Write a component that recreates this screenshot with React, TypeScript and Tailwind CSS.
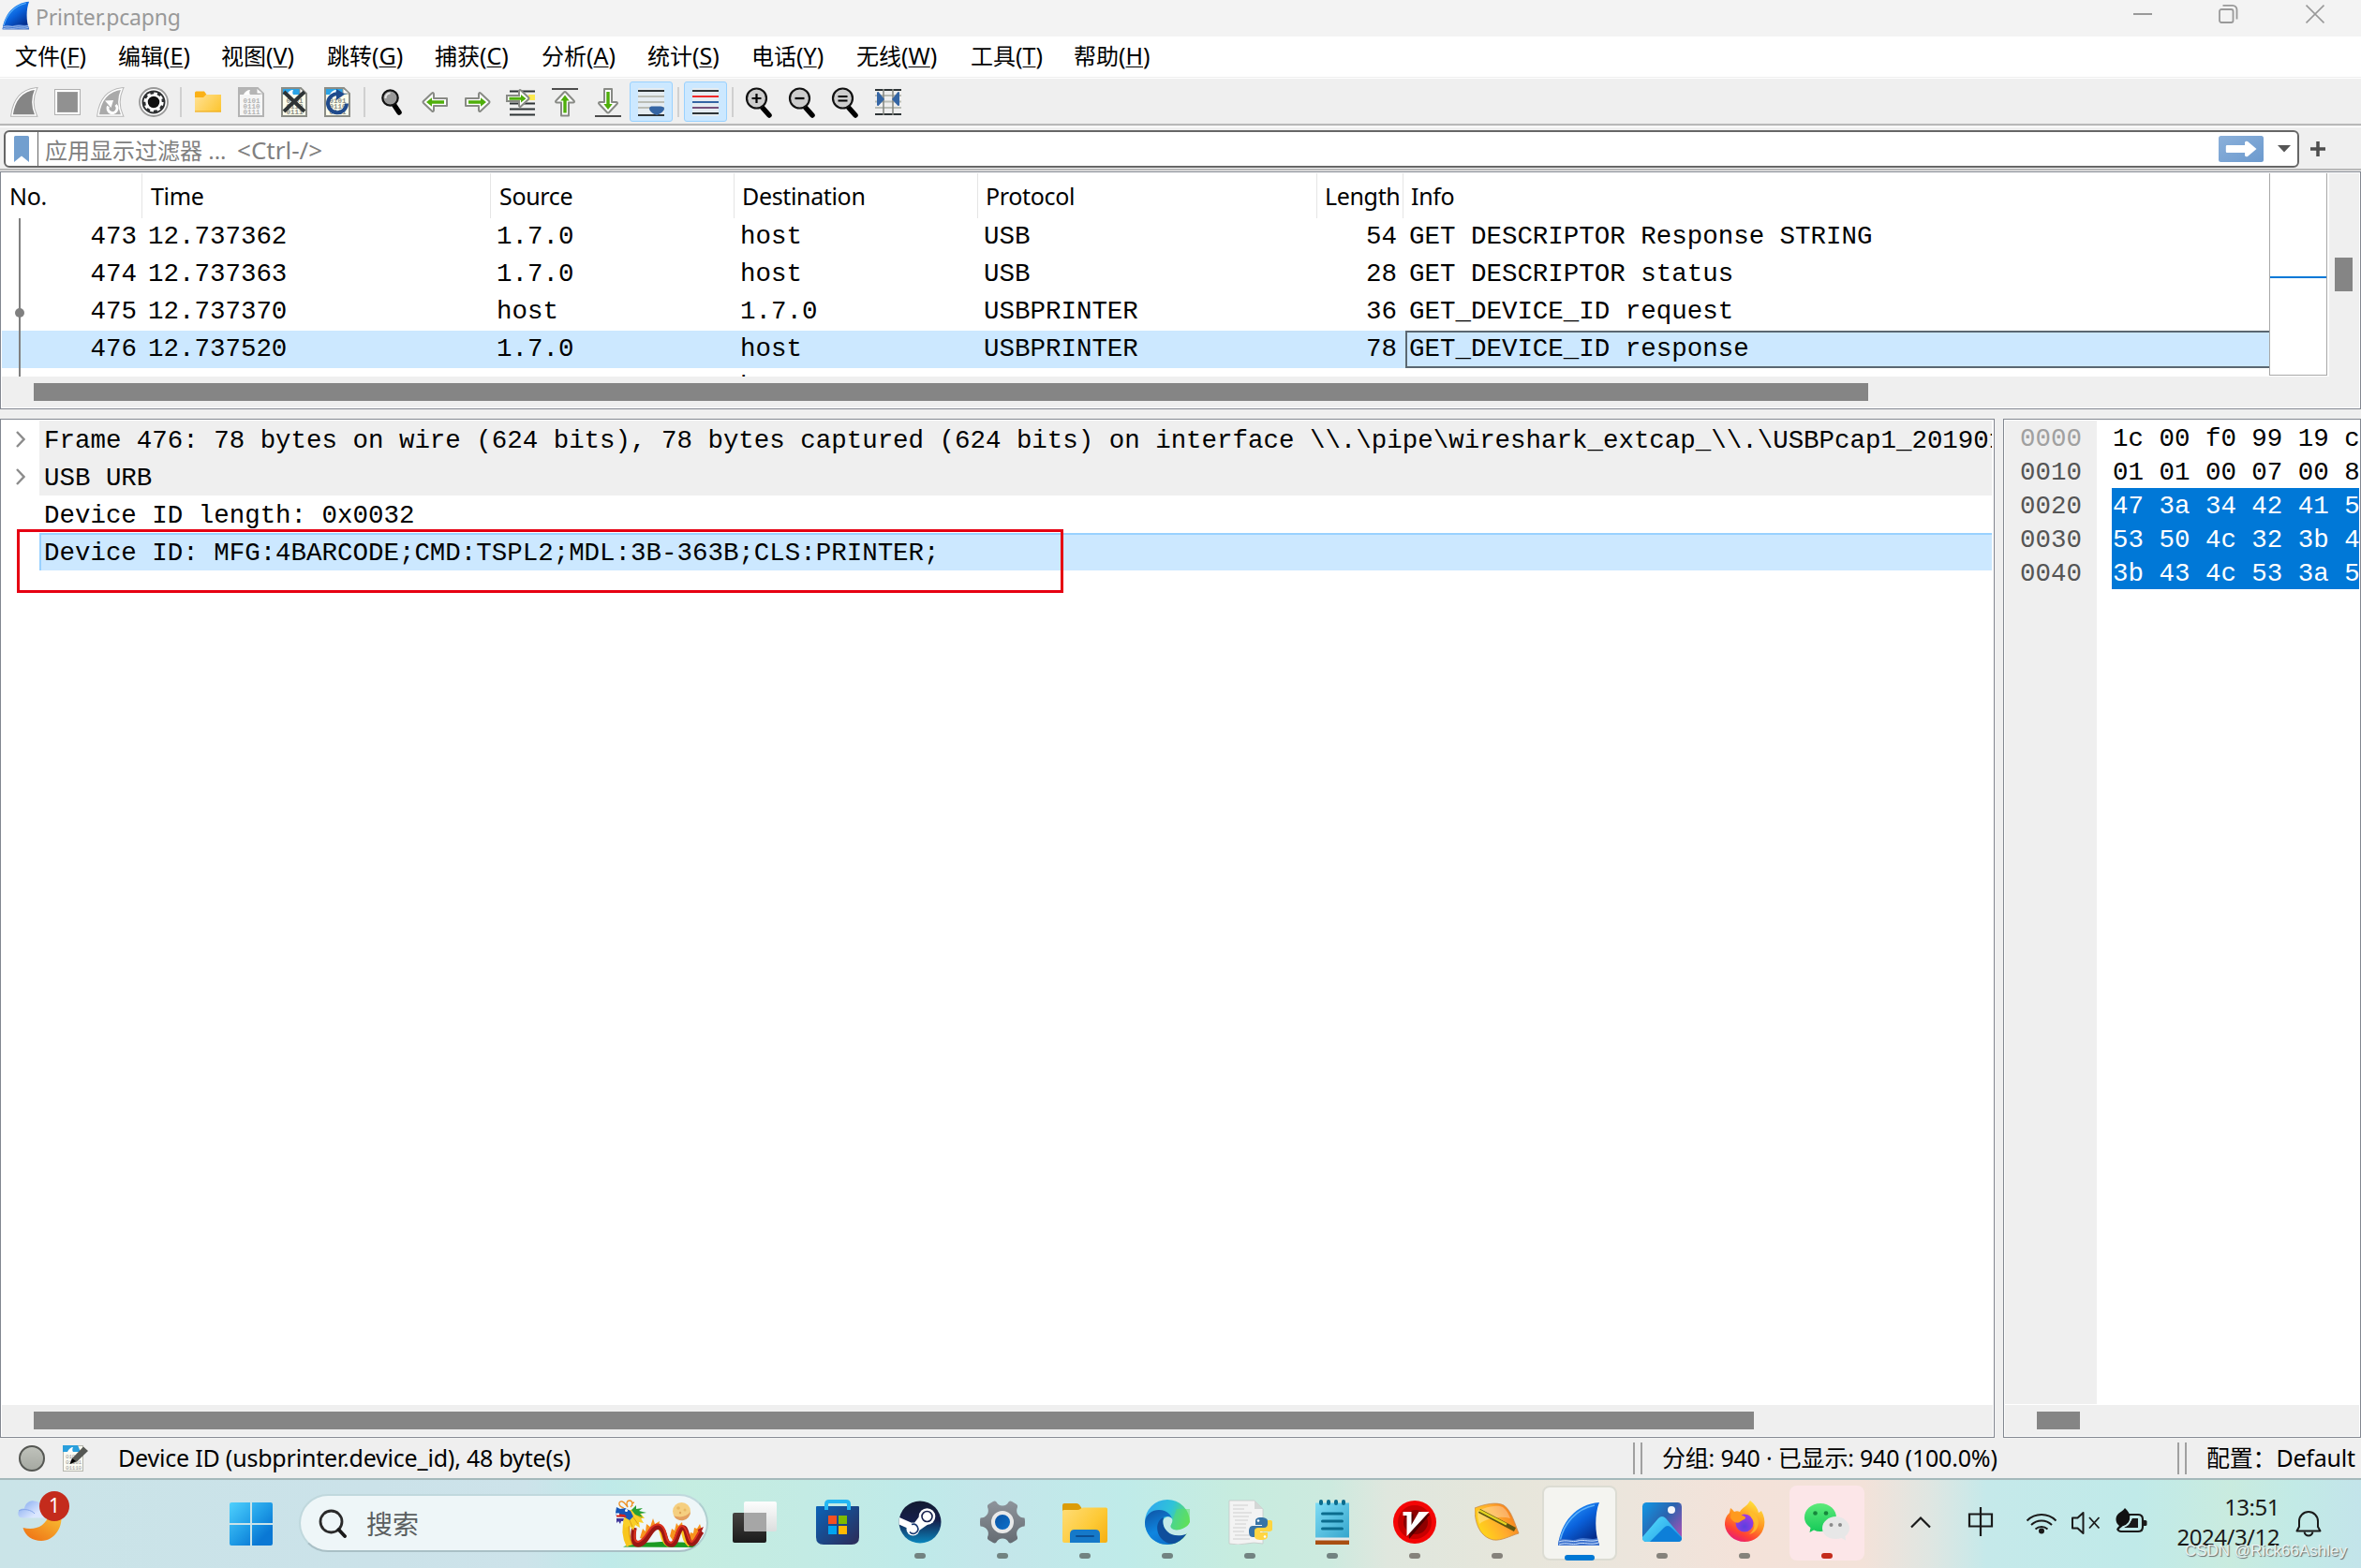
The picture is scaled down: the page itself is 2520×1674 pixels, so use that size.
import React from 'react';

type Kids = { children?: React.ReactNode };

const UI = "font-['Noto_Sans','Noto_Sans_CJK_SC',sans-serif]";
const MONO = "font-['Liberation_Mono',monospace]";

/* ---------- shared drawings ---------- */

function Svg({ w, h, vb, children, className = '' }: Kids & { w: number; h: number; vb?: string; className?: string }) {
  return (
    <svg width={w} height={h} viewBox={vb ?? `0 0 ${w} ${h}`} fill="none" className={`block shrink-0 ${className}`}>
      {children}
    </svg>
  );
}

function SharkFin({ size, id }: { size: number; id: string }) {
  return (
    <Svg w={size} h={size} vb="0 0 48 48">
      <defs>
        <linearGradient id={id} x1="10" y1="4" x2="40" y2="44" gradientUnits="userSpaceOnUse">
          <stop offset="0" stopColor="#2a9bff" />
          <stop offset="0.45" stopColor="#0a62dc" />
          <stop offset="1" stopColor="#04237c" />
        </linearGradient>
      </defs>
      <path d="M1 47C4 22 20 3 45 1c-5 12-5 32 0 46Z" fill={`url(#${id})`} />
      <path d="M3 42C7 24 20 8 40 4" stroke="#6fc0ff" strokeWidth="1.6" opacity="0.8" />
      <path d="M2 41c8-3 12 2 20-1s14 2 21-1l2 8H1Z" fill="#3f74cf" />
      <path d="M2 43c8-3 14 1 20-1s14 2 22-1M2 46c8-3 14 1 20-1s14 2 22-1" stroke="#cfe2fb" strokeWidth="1" />
    </Svg>
  );
}

/* ---------- title bar ---------- */

function TitleBar() {
  return (
    <header className="flex h-[39px] shrink-0 items-start bg-[#f3f3f3]">
      <div className="pt-px pl-0.5">
        <SharkFin size={31} id="finTitle" />
      </div>
      <span className="ml-[5px] h-[36px] text-[23px] leading-[36px] tracking-[-0.2px] text-[#999999]">Printer.pcapng</span>
      <div className="ml-auto flex pt-[4px]">
        <Svg w={20} h={24} className="mr-[71px]">
          <path d="M0 11h20" stroke="#999" strokeWidth="2" />
        </Svg>
        <Svg w={21} h={24} className="mr-[72px]">
          <rect x="1" y="6" width="14.500" height="14" rx="2" stroke="#999" strokeWidth="1.800" />
          <path d="M4.500 1.900h10.500a4.500 4.500 0 0 1 4.500 4.500v10" stroke="#999" strokeWidth="1.800" />
        </Svg>
        <Svg w={20} h={24} className="mr-[39px]">
          <path d="M0.500 1.500l19 19M19.500 1.500l-19 19" stroke="#999" strokeWidth="1.700" />
        </Svg>
      </div>
    </header>
  );
}

/* ---------- menu bar ---------- */

function MenuBar() {
  const items: [string, string, string][] = [
    ['文件', 'F', 'w-[110px]'],
    ['编辑', 'E', 'w-[110px]'],
    ['视图', 'V', 'w-[113px]'],
    ['跳转', 'G', 'w-[115px]'],
    ['捕获', 'C', 'w-[114px]'],
    ['分析', 'A', 'w-[113px]'],
    ['统计', 'S', 'w-[111px]'],
    ['电话', 'Y', 'w-[112px]'],
    ['无线', 'W', 'w-[122px]'],
    ['工具', 'T', 'w-[110px]'],
    ['帮助', 'H', 'w-[110px]'],
  ];
  return (
    <nav className="flex h-[43px] shrink-0 bg-white pl-4">
      {items.map(([zh, key, width]) => (
        <span key={key} className={`${width} shrink-0 whitespace-nowrap text-[24px] leading-[41px] text-black`}>
          {zh}
          <span className="text-[25px]">
            (<span className="underline decoration-1 underline-offset-2">{key}</span>)
          </span>
        </span>
      ))}
    </nav>
  );
}

/* ---------- tool bar ---------- */

function Tool({ children, on = false }: Kids & { on?: boolean }) {
  return (
    <div
      className={`flex h-[43px] w-[46px] shrink-0 items-center justify-center rounded-[3px] border ${
        on ? 'border-[#99d1ff] bg-[#cce8ff]' : 'border-transparent'
      }`}
    >
      {children}
    </div>
  );
}

function Sep() {
  return (
    <div className="flex h-[43px] w-[12px] shrink-0 items-center justify-center">
      <div className="h-[32px] w-[2px] bg-[#d0d0d0]" />
    </div>
  );
}

const FIN = 'M3 30C5 15 12 4 28 2c-4 9-4 19 0 28Z';

function DocBase({ paper, edge, top }: { paper: string; edge: string; top: string }) {
  return (
    <>
      <path d="M1 1h20l6 6v24H1Z" fill={paper} stroke={edge} strokeWidth="2" />
      <path d="M2 2h18l4 6H2Z" fill={top} />
      <path d="M6 8c1-3 4-5 7-5-1 2-1 4 0 5Z" fill="#fff" />
      <path d="M20 1v6h7Z" fill="#fff" stroke={edge} />
      <g fill={edge} fontSize="7.500" fontFamily="Liberation Mono" fontWeight="bold">
        <text x="5.500" y="16.500">0101</text>
        <text x="5.500" y="22.500">0110</text>
        <text x="5.500" y="28.500">0111</text>
      </g>
    </>
  );
}

function Arrow({ rot, barred = false }: { rot: number; barred?: boolean }) {
  return (
    <Svg w={32} h={32}>
      {barred && <path d={rot === -90 ? 'M2 2h28' : 'M2 31h28'} stroke="#4c4c4c" strokeWidth="2" />}
      <g transform={`translate(0 ${barred ? (rot === -90 ? 1.5 : -1) : 0}) rotate(${rot} 16 16)`}>
        <path d="M3 12h14V7.500c0-1.500 1-2 2-1l9 8.500c.7.700.7 1.300 0 2l-9 8.500c-1 1-2 .5-2-1V20H3Z" fill="#fff" stroke="#888a85" strokeWidth="2" strokeLinejoin="round" />
        <path d="M6 14.300h13v-3l6 4.700-6 4.700v-3H6Z" fill="#4fae0b" />
      </g>
    </Svg>
  );
}

function Zoom({ mark }: { mark: string }) {
  return (
    <Svg w={30} h={36}>
      <path d="M18 23l8 9" stroke="#000" strokeWidth="5.500" strokeLinecap="round" />
      <circle cx="12.500" cy="14" r="10.500" fill="#cdcdcd" stroke="#111" strokeWidth="2.200" />
      <path d={mark} stroke="#000" strokeWidth="2.200" />
    </Svg>
  );
}

function ToolBar() {
  return (
    <div className="flex h-[48px] shrink-0 items-start bg-[#efefef] pt-[3px] pl-[3px]">
      <Tool>
        <Svg w={32} h={32}>
          <path d={FIN} fill="#808080" stroke="#b4b4b4" strokeWidth="3.500" />
          <path d={FIN} fill="#858585" stroke="#fff" strokeWidth="1.500" />
        </Svg>
      </Tool>
      <Tool>
        <Svg w={28} h={28}>
          <rect x="0.500" y="0.500" width="27" height="27" fill="#fff" stroke="#b0b0b0" />
          <rect x="3.500" y="3.500" width="21" height="21" fill="#919191" stroke="#9c9c9c" />
        </Svg>
      </Tool>
      <Tool>
        <Svg w={32} h={32}>
          <path d={FIN} fill="#b4b4b4" stroke="#b8b8b8" strokeWidth="3.500" />
          <path d={FIN} fill="#aaa" stroke="#fff" strokeWidth="1.500" />
          <path d="M21.500 19a5 5 0 1 1-8 1.500" stroke="#fff" strokeWidth="3" />
          <path d="M10 14.500l9-.500-2.500 8Z" fill="#fff" />
        </Svg>
      </Tool>
      <Tool>
        <Svg w={32} h={32}>
          <circle cx="16" cy="16" r="15" fill="#fff" stroke="#999" strokeWidth="1.800" />
          <circle cx="16" cy="16" r="12.500" fill="#2e3032" />
          <circle cx="16" cy="16" r="7.500" fill="#111" stroke="#fff" strokeWidth="2.500" />
          <circle cx="16" cy="16" r="9.300" stroke="#fff" strokeWidth="2.600" strokeDasharray="3.600 3.700" />
        </Svg>
      </Tool>
      <Sep />
      <Tool>
        <Svg w={28} h={24}>
          <defs>
            <linearGradient id="fold" x1="0" y1="4" x2="26" y2="24" gradientUnits="userSpaceOnUse">
              <stop stopColor="#ffe296" />
              <stop offset="1" stopColor="#fdc52f" />
            </linearGradient>
          </defs>
          <path d="M0 2a1.500 1.500 0 0 1 1.500-1.500H10L12.500 4v5H0Z" fill="#fbb116" />
          <path d="M0 7h9l3-3h16v18.500H0Z" fill="url(#fold)" />
          <path d="M0 22h28" stroke="#eda91b" />
        </Svg>
      </Tool>
      <Tool>
        <Svg w={28} h={32}>
          <DocBase paper="#f6f6f6" edge="#b3b3b3" top="#b5b5b5" />
        </Svg>
      </Tool>
      <Tool>
        <Svg w={28} h={32}>
          <DocBase paper="#fdfdec" edge="#8b8d86" top="#2aa3e6" />
          <path d="M3 5l22 21M25 5L3 26" stroke="#2e3436" strokeWidth="4" />
        </Svg>
      </Tool>
      <Tool>
        <Svg w={28} h={32}>
          <DocBase paper="#fdfdec" edge="#8b8d86" top="#2aa3e6" />
          <path d="M16 7.500a10 10 0 1 0 8 10" stroke="#1f4a8c" strokeWidth="4" />
          <path d="M13 2l9 5.500-9 6.500Z" fill="#1f4a8c" />
        </Svg>
      </Tool>
      <Sep />
      <Tool>
        <Svg w={24} h={30}>
          <path d="M14 17l6 9" stroke="#000" strokeWidth="5.500" strokeLinecap="round" />
          <circle cx="10.500" cy="10.500" r="8.200" fill="#999" stroke="#111" strokeWidth="2.200" />
          <path d="M5.500 11a5 5 0 0 1 5-5.500" stroke="#e6e6e6" strokeWidth="2" />
        </Svg>
      </Tool>
      <Tool>
        <Arrow rot={180} />
      </Tool>
      <Tool>
        <Arrow rot={0} />
      </Tool>
      <div className="w-px shrink-0" />
      <Tool>
        <Svg w={34} h={32}>
          <path d="M4 4.500h27M4 23.500h27M4 29.500h27M4 17.500h27" stroke="#2e3436" strokeWidth="2" />
          <path d="M24 8h7v6h-7Z" fill="#fce94f" />
          <path d="M1 9h13V4.500c0-1.500 1-2 2-1l8 7.500c.7.700.7 1.300 0 2l-8 7.500c-1 1-2 .5-2-1V15H1Z" fill="#fff" stroke="#888a85" strokeWidth="2" />
          <path d="M3.500 10.800H16V8l5.500 4.200L16 16.500v-2.800H3.500Z" fill="#4fae0b" />
        </Svg>
      </Tool>
      <Tool>
        <Arrow rot={-90} barred />
      </Tool>
      <Tool>
        <Arrow rot={90} barred />
      </Tool>
      <Tool on>
        <Svg w={28} h={30}>
          <rect width="28" height="30" fill="#eeeeec" opacity="0.75" />
          <path d="M0 3h28M0 29h28" stroke="#2e3436" strokeWidth="2" />
          <path d="M0 9h28M0 15h28M0 21h28" stroke="#babdb6" strokeWidth="2" />
          <path d="M12 22c0-2 2-2.500 3-2.500h9c2 0 4 1 4 2.500 0 3-6 6.500-8 7-3-1-8-4-8-7Z" fill="#3465a4" />
        </Svg>
      </Tool>
      <Sep />
      <Tool on>
        <Svg w={28} h={30}>
          <rect width="28" height="30" fill="#eeeeec" opacity="0.75" />
          <path d="M0 3h28M0 27h28" stroke="#2e3436" strokeWidth="2" />
          <path d="M0 9h28" stroke="#ef2929" strokeWidth="2" />
          <path d="M0 15h28" stroke="#3465a4" strokeWidth="2" />
          <path d="M0 21h28" stroke="#75507b" strokeWidth="2" />
        </Svg>
      </Tool>
      <div className="-mr-px flex">
        <Sep />
      </div>
      <Tool>
        <Zoom mark="M7.500 14h10M12.500 9v10" />
      </Tool>
      <Tool>
        <Zoom mark="M7.500 14h10" />
      </Tool>
      <Tool>
        <Zoom mark="M7.500 12h10M7.500 16.500h10" />
      </Tool>
      <Tool>
        <Svg w={28} h={30}>
          <path d="M0 8h28M0 14.500h28M0 21h28" stroke="#babdb6" strokeWidth="2" />
          <path d="M0 2h28M0 28h28" stroke="#2e3436" strokeWidth="2" />
          <path d="M9 1v28M19 1v28" stroke="#888a85" strokeWidth="1.600" />
          <path d="M2 5c0-1 1-1 1.500-1L10 12l-6.500 7C2.500 19 2 18.500 2 18ZM26 5c0-1-1-1-1.500-1L18 12l6.500 7c1 0 1.500-.5 1.500-1Z" fill="#3465a4" />
        </Svg>
      </Tool>
    </div>
  );
}

/* ---------- display filter ---------- */

function FilterBar() {
  return (
    <div className="flex h-[44px] shrink-0 items-start bg-[#efefef] pt-[3px] pl-1">
      <div className="flex h-[40px] w-[2450px] shrink-0 items-center rounded-[6px] border-2 border-[#666666] bg-white">
        <div className="flex h-full w-[35px] shrink-0 items-center justify-center border-r border-[#666666]">
          <Svg w={16} h={28}>
            <path d="M0 1.500Q0 0 1.500 0h13Q16 0 16 1.500V28l-8-6.500L0 28Z" fill="#729fcf" />
          </Svg>
        </div>
        <span className="mt-[2px] ml-[7px] text-[24px] leading-[36px] text-[#808080]">
          应用显示过滤器 ...&nbsp; <span className="-ml-px text-[26px]">&lt;Ctrl-/&gt;</span>
        </span>
        <Svg w={48} h={28} className="ml-auto">
          <defs>
            <linearGradient id="apply" x1="0" y1="0" x2="1" y2="1">
              <stop stopColor="#8bb0da" />
              <stop offset="1" stopColor="#6c9ace" />
            </linearGradient>
          </defs>
          <rect width="48" height="28" rx="2.500" fill="url(#apply)" />
          <path d="M9 10h19V7q1-2 3-1l9.500 8L31 22q-2 1-3-1v-3H9q-1.200 0-1.200-1.200v-5.600Q7.800 10 9 10Z" fill="#fff" />
        </Svg>
        <Svg w={14} h={8} className="mr-[7px] ml-[15px]">
          <path d="M0 0h14L7 7.500Z" fill="#555" />
        </Svg>
      </div>
      <Svg w={16} h={16} className="mt-[12px] ml-[12px]">
        <path d="M0 8h16M8 0v16" stroke="#4d4d4d" strokeWidth="3.500" />
      </Svg>
    </div>
  );
}

/* ---------- packet list ---------- */

const cols = ['w-[150px] pl-[8px]', 'w-[372px] pl-[9px]', 'w-[260px] pl-[9px]', 'w-[260px] pl-[8px]', 'w-[362px] pl-[8px]', 'w-[92px] pl-[8px]'];

function PacketList() {
  const heads = ['No.', 'Time', 'Source', 'Destination', 'Protocol', 'Length'];
  const rows = [
    ['473', '12.737362', '1.7.0', 'host', 'USB', '54', 'GET DESCRIPTOR Response STRING'],
    ['474', '12.737363', '1.7.0', 'host', 'USB', '28', 'GET DESCRIPTOR status'],
    ['475', '12.737370', 'host', '1.7.0', 'USBPRINTER', '36', 'GET_DEVICE_ID request'],
    ['476', '12.737520', '1.7.0', 'host', 'USBPRINTER', '78', 'GET_DEVICE_ID response'],
    ['', '', '', 'host', '', '', ''],
  ];
  return (
    <section className="flex h-[254px] shrink-0 flex-col border border-[#828790] bg-white p-px">
      <div className="flex h-[217px] shrink-0">
        <div className="relative w-[2420px] shrink-0 overflow-hidden">
          <div className="flex h-[48px] items-center text-[25px] leading-[49px] tracking-[-0.35px] text-black">
            {heads.map((h, i) => (
              <div key={h} className={`${cols[i]} h-full shrink-0 border-r border-[#e5e5e5]`}>
                <div className={i === 5 ? 'w-[79px] overflow-hidden' : ''}>{h}</div>
              </div>
            ))}
            <div className="pl-[8px]">Info</div>
          </div>
          {rows.map((r, i) => (
            <div key={i} className={`flex h-[40px] text-black ${MONO} text-[27.480px] leading-[40px] whitespace-pre ${i === 3 ? 'bg-[#cce8ff]' : ''}`}>
              <span className="w-[144px] shrink-0 text-right">{r[0]}</span>
              <span className="ml-[12px] w-[372px] shrink-0">{r[1]}</span>
              <span className="w-[260px] shrink-0">{r[2]}</span>
              <span className="w-[260px] shrink-0">{r[3]}</span>
              <span className="w-[340px] shrink-0">{r[4]}</span>
              <span className="w-[101px] shrink-0 text-right">{r[5]}</span>
              <span className={`ml-[9px] h-[40px] grow border-y-2 pl-[2px] leading-[36px] ${i === 3 ? 'border-l-2 border-[#5a6771]' : 'border-l-2 border-transparent'}`}>{r[6]}</span>
            </div>
          ))}
          <div className="absolute top-[48px] left-[18px] h-[170px] w-[2px] bg-[#808080]" />
          <div className="absolute top-[144px] left-[14px] size-[10px] rounded-full bg-[#808080]" />
        </div>
        <div className="flex h-[216px] w-[62px] shrink-0 flex-col border border-t-0 border-[#a8a8a8] pt-[110px]">
          <div className="h-[2px] bg-[#0078d7]" />
        </div>
        <div className="ml-[2px] flex grow flex-col items-center bg-[#efefef] pt-[90px] pr-px">
          <div className="h-[36px] w-[19px] bg-[#858585]" />
        </div>
      </div>
      <div className="h-[33px] shrink-0 bg-[#efefef] pt-[7px] pl-[34px]">
        <div className="h-[19px] w-[1958px] bg-[#858585]" />
      </div>
    </section>
  );
}

/* ---------- packet details ---------- */

function Details() {
  const rows: [string, boolean][] = [
    ['Frame 476: 78 bytes on wire (624 bits), 78 bytes captured (624 bits) on interface \\\\.\\pipe\\wireshark_extcap_\\\\.\\USBPcap1_201901', true],
    ['USB URB', true],
    ['Device ID length: 0x0032', false],
    ['Device ID: MFG:4BARCODE;CMD:TSPL2;MDL:3B-363B;CLS:PRINTER;', false],
  ];
  return (
    <section className="relative flex h-[1088px] w-[2129px] shrink-0 flex-col border border-[#828790] bg-white p-px">
      {rows.map(([text, parent], i) => (
        <div key={i} className="flex h-[40px] shrink-0 items-center">
          <div className="flex w-[40px] shrink-0 pl-[15px]">
            {parent && (
              <Svg w={10} h={18}>
                <path d="M1 1l7.500 8L1 17" stroke="#8c8c8c" strokeWidth="2.400" />
              </Svg>
            )}
          </div>
          <div
            className={`h-[40px] w-[2084px] overflow-hidden whitespace-pre text-black ${MONO} text-[27.460px] ${
              i === 3
                ? 'border-t-2 border-l-2 border-[#99d1ff] bg-[#cce8ff] pl-[3px] leading-[40px]'
                : parent
                  ? 'bg-[#efefef] pl-[5px] leading-[43px]'
                  : 'pl-[5px] leading-[43px]'
            }`}
          >
            {text}
          </div>
        </div>
      ))}
      <div className="mt-auto h-[33px] shrink-0 bg-[#efefef] pt-[7px] pl-[34px]">
        <div className="h-[19px] w-[1836px] bg-[#858585]" />
      </div>
      <div className="absolute top-[117px] left-[17px] h-[68px] w-[1117px] border-[3px] border-[#e60012]" />
    </section>
  );
}

function HexPane() {
  const rows = [
    ['0000', '1c 00 f0 99 19 c'],
    ['0010', '01 01 00 07 00 8'],
    ['0020', '47 3a 34 42 41 5'],
    ['0030', '53 50 4c 32 3b 4'],
    ['0040', '3b 43 4c 53 3a 5'],
  ];
  return (
    <section className="ml-[9px] flex h-[1088px] w-[382px] shrink-0 flex-col border border-[#828790] bg-white p-px">
      <div className={`flex h-[1050px] shrink-0 ${MONO} text-[27.480px] leading-[39px]`}>
        <div className="w-[98px] shrink-0 bg-[#efefef] pl-[16px]">
          {rows.map(([o], i) => (
            <div key={o} className={`h-[36px] ${i === 0 ? 'text-[#a0a0a0]' : 'text-[#555555]'}`}>{o}</div>
          ))}
        </div>
        <div className="ml-[16px] w-[264px] overflow-hidden">
          {rows.map(([o, b], i) => (
            <div key={o} className={`h-[36px] pl-px whitespace-pre ${i > 1 ? 'bg-[#0078d7] text-white' : 'text-black'}`}>{b}</div>
          ))}
        </div>
      </div>
      <div className="mt-auto h-[33px] shrink-0 bg-[#efefef] pt-[7px] pl-[34px]">
        <div className="h-[19px] w-[46px] bg-[#858585]" />
      </div>
    </section>
  );
}

/* ---------- status bar ---------- */

function Grip() {
  return <div className="h-[34px] w-[10px] shrink-0 border-x-2 border-[#a0a0a0]" />;
}

function StatusBar() {
  return (
    <div className="flex h-[43px] shrink-0 items-center bg-[#efefef] text-[25px] leading-[45px] tracking-[-0.2px] whitespace-nowrap text-black">
      <Svg w={30} h={30} className="ml-[19px]">
        <defs>
          <linearGradient id="led" x1="0" y1="0" x2="0" y2="1">
            <stop stopColor="#c0c3bc" />
            <stop offset="1" stopColor="#a5a8a1" />
          </linearGradient>
        </defs>
        <circle cx="15" cy="15" r="13" fill="url(#led)" stroke="#555753" strokeWidth="2" />
      </Svg>
      <Svg w={28} h={30} className="ml-[18px]">
        <rect x="0.500" y="1.500" width="21" height="27" fill="#fbfbf3" stroke="#b5b6ae" />
        <path d="M0 1h16l3 7H0Z" fill="#2a9fdc" />
        <path d="M5 8c1-3 4-5 6-5-1 2-1 4 0 5Z" fill="#fff" />
        <g fill="#999" fontSize="6" fontFamily="Liberation Mono">
          <text x="3" y="15">0101</text>
          <text x="3" y="21">01101</text>
          <text x="3" y="27">01110</text>
        </g>
        <path d="M10 15L22 2.500l5 4.500L15 18.500 8 21Z" fill="#555753" />
        <path d="M10 15l-2.500 6L14 18Z" fill="#000" />
      </Svg>
      <span className="ml-[31px] w-[1617px]">Device ID (usbprinter.device_id), 48 byte(s)</span>
      <Grip />
      <span className="ml-[21px] w-[550px]">分组: 940 · 已显示: 940 (100.0%)</span>
      <Grip />
      <span className="ml-[21px]">配置：Default</span>
    </div>
  );
}

/* ---------- taskbar ---------- */

function Weather() {
  return (
    <div className="relative ml-[19px] w-[60px] shrink-0">
      <Svg w={60} h={60}>
        <defs>
          <linearGradient id="moon" x1="40" y1="24" x2="22" y2="55" gradientUnits="userSpaceOnUse">
            <stop stopColor="#f8bf33" />
            <stop offset="1" stopColor="#f07a18" />
          </linearGradient>
          <linearGradient id="cloud" x1="0" y1="12" x2="14" y2="30" gradientUnits="userSpaceOnUse">
            <stop stopColor="#7fa6ee" />
            <stop offset="1" stopColor="#dbe7ff" />
          </linearGradient>
        </defs>
        <path d="M5.500 40C17 43 30 40 34 24h12c3 14-6 30-21 30-9 0-17-5-19.500-14Z" fill="url(#moon)" />
        <path d="M6 29.500c-5 0-6-3-5.500-6 .5-3 4-4.500 6.500-4 1-5 5-9 10-8 5 0 8 3 9 7l2 11Z" fill="url(#cloud)" />
        <path d="M1 22c5-3 14-1 17 3" stroke="#86a7ea" />
      </Svg>
      <div className="absolute top-[1px] left-[23px] flex size-[32px] items-center justify-center rounded-full bg-[#c42b1c] text-[21px] text-white">1</div>
    </div>
  );
}

function Dragon() {
  return (
    <Svg w={96} h={54}>
      <path d="M8 51.500c6-3 14-2 20-4 16-2 40-2 50 0l8 2-4 2.500Z" fill="#1b9a22" />
      <path d="M26 42l3-10 3 3 1-8 4 3 3-9 2 6 5-3-1 7-7 5-6 9ZM58 40l2-8 3 2 2-8 2 3 4-4 1 6-5 6-5 9ZM78 42l2-6 3 1 1-6 3 1 3-5 2 6-5 7-5 7Z" fill="#f7931e" />
      <path d="M13 22c-3 8-3 18 2 28" stroke="#f8c61c" strokeWidth="7" />
      <path d="M15 24c-1 9-1 17 3 25" stroke="#e39a10" strokeWidth="1.500" />
      <path d="M47 30c3 6 2 16 10 20M71 31c2 8 2 14 8 19" stroke="#f8c61c" strokeWidth="4" />
      <path d="M20 31c-2 10-1 18 4 18 7 0 10-9 15-15 4-5 9-5 12 1 3 7 2 14 9 14 6 0 6-18 12-18 5 0 4 18 10 17 5-1 5-7 10-13" stroke="#9c1714" strokeWidth="5.500" />
      <path d="M21 33c-1 8-1 13 3 13 6-1 9-9 14-15 5-5 11-5 14 2 3 7 2 13 7 14 6-1 6-18 12-18 6 1 6 16 10 17 4-1 5-7 9-12" stroke="#dc3320" strokeWidth="2" />
      <path d="M90 37l2-5-4 2" stroke="#b01c18" strokeWidth="2" />
      <path d="M12 13l8-2 7 5 4 5-4 0 3 5-5-1 1 6-5-3-2 6-4-5-5 2-2-7Z" fill="#f9cf28" />
      <path d="M15 23l3 7M19 20l5 7M22 17l6 4" stroke="#d99b12" strokeWidth="0.900" />
      <path d="M17 12l5-5 0 4 7-1-4 3 8 2-7 1 3 4-8-3Z" fill="#27a035" />
      <path d="M1 9l4 2 5-1 6 3 3 6-4 4-5-3-9-1-1-4Z" fill="#1556b8" />
      <path d="M1 16l9 1 2 3-4-.500-7 0Z" fill="#d8261c" />
      <path d="M0 15.500h4v2H1Z" fill="#fff" />
      <path d="M1 21l8 0-1 3-2 0-1 3-2-3-2 2Z" fill="#40379b" />
      <circle cx="11.500" cy="12.500" r="1.500" fill="#fff" />
      <path d="M9 10C2 8 3 2 7 3c3 .500 4 4 6 6-2-4-1-7 2-7s4 4 1 7M18 8c-1-2 0-4 2-4" stroke="#ee8f22" strokeWidth="1.300" />
      <circle cx="70.500" cy="13.500" r="9.500" fill="#f5cf80" />
      <path d="M62 18a9.500 9.500 0 0 0 18-4c-4 5-11 7-18 4Z" fill="#e3a060" />
      <circle cx="67" cy="10" r="1.800" fill="#e8b862" />
      <circle cx="74" cy="12" r="1.500" fill="#e8b862" />
      <circle cx="69" cy="15" r="1.200" fill="#e0a455" />
    </Svg>
  );
}

function App48({ children, dot = 'bg-[#7a8483]', tile = '' }: Kids & { dot?: string; tile?: string }) {
  return (
    <div className="flex h-[94px] w-[88px] shrink-0 justify-center">
      <div className={`mt-[6px] flex h-[80px] w-[80px] flex-col items-center rounded-[8px] ${tile}`}>
        <div className="flex h-[72px] shrink-0 items-center justify-center">
          <div className="mt-[6px]">{children}</div>
        </div>
        <div className={`h-[6px] shrink-0 rounded-full ${dot}`} />
      </div>
    </div>
  );
}

const IDLE = 'w-[12px] bg-[#728381]';
const IDLE_WARM = 'w-[12px] bg-[#85827b]';

function PythonMark() {
  return (
    <>
      <path d="M32 19c-4 0-6 1-6 4v4h7v1H23c-3 0-4 3-4 6s1 6 4 6h2v-4c0-2 2-4 4-4h7c2 0 3-1 3-3v-6c0-3-3-4-7-4Z" fill="#3874a6" />
      <path d="M34 43c4 0 7-1 7-4v-4h-8v-1h10c3 0 4-3 4-6s-1-6-3-6h-3v4c0 2-1 4-4 4h-6c-2 0-4 1-4 3v6c0 3 3 4 7 4Z" transform="translate(-2 0)" fill="#ffd541" />
      <circle cx="29" cy="22.500" r="1.300" fill="#fff" />
      <circle cx="36" cy="39.500" r="1.300" fill="#fff" />
    </>
  );
}

function TaskApps() {
  return (
    <>
      <App48 dot="w-0">
        <Svg w={48} h={48}>
          <defs>
            <linearGradient id="tvD" x1="0" y1="0" x2="0" y2="1"><stop stopColor="#454341" /><stop offset="1" stopColor="#1b1b1b" /></linearGradient>
            <linearGradient id="tvL" x1="0" y1="0" x2="0" y2="1"><stop stopColor="#fdfdfd" /><stop offset="1" stopColor="#dcdede" /></linearGradient>
          </defs>
          <rect x="0" y="14" width="36" height="32" rx="2" fill="url(#tvD)" />
          <rect x="12" y="2" width="35" height="32" rx="2" fill="url(#tvL)" />
          <path d="M12 14h24v20H14q-2 0-2-2Z" fill="#a6a6a6" />
        </Svg>
      </App48>
      <App48 dot="w-0">
        <Svg w={48} h={48}>
          <defs>
            <linearGradient id="store" x1="0" y1="8" x2="40" y2="48" gradientUnits="userSpaceOnUse"><stop stopColor="#0a63b8" /><stop offset="1" stopColor="#2a2f5e" /></linearGradient>
          </defs>
          <path d="M1 8q0-1 1-1h44q1 0 1 1v32q0 8-8 8H9q-8 0-8-8Z" fill="url(#store)" />
          <path d="M12 11V5q0-3 3-3h18q3 0 3 3v6" stroke="#24b7f3" strokeWidth="4" />
          <path d="M14 17h9v9h-9Z" fill="#f25022" />
          <path d="M25 17h9v9h-9Z" fill="#7fba00" />
          <path d="M14 28h9v9h-9Z" fill="#00a4ef" />
          <path d="M25 28h9v9h-9Z" fill="#ffb900" />
        </Svg>
      </App48>
      <App48 dot={IDLE}>
        <Svg w={48} h={48}>
          <defs>
            <linearGradient id="steam" x1="0" y1="0" x2="0" y2="1"><stop stopColor="#131b31" /><stop offset="0.450" stopColor="#151e4a" /><stop offset="1" stopColor="#0986bd" /></linearGradient>
            <clipPath id="steamC"><circle cx="24" cy="24" r="22.500" /></clipPath>
          </defs>
          <circle cx="24" cy="24" r="22.500" fill="url(#steam)" />
          <g clipPath="url(#steamC)">
            <path d="M0 22l18 8" stroke="#fff" strokeWidth="7" />
            <path d="M17 26l10-13 9 11-13 9Z" fill="#fff" />
            <circle cx="16.500" cy="31.500" r="7" fill="#fff" />
            <path d="M13 34.500a5 5 0 1 0 2-8" stroke="#1a3a72" strokeWidth="1.600" />
            <circle cx="31.500" cy="18" r="8.800" fill="#fff" />
            <circle cx="31.500" cy="18" r="5.500" stroke="#17214d" strokeWidth="1.600" />
          </g>
        </Svg>
      </App48>
      <App48 dot={IDLE}>
        <Svg w={48} h={48}>
          <defs>
            <linearGradient id="gear" x1="0" y1="0" x2="0" y2="1"><stop stopColor="#8e949b" /><stop offset="1" stopColor="#656b72" /></linearGradient>
            <linearGradient id="gearB" x1="0" y1="0" x2="1" y2="1"><stop stopColor="#0a4f9e" /><stop offset="1" stopColor="#0d74d1" /></linearGradient>
          </defs>
          <path d="M14 2q2-1 3.500.5 2 4 6.500 4t6.500-4Q32 1 34 2l5 3q1.500 1 1 3-2 4.500.5 8t7 3.500q.5 1 .5 4.500t-.5 4.500q-4.500 0-7 3.500t-.5 8q.5 2-1 3l-5 3q-2 1-3.500-.5-2-4-6.500-4t-6.500 4Q16 47 14 46l-5-3q-1.500-1-1-3 2-4.500-.5-8t-7-3.500Q0 27.500 0 24t.500-4.500q4.500 0 7-3.500T8 8Q7.500 6 9 5Z" fill="url(#gear)" />
          <circle cx="24" cy="24" r="10" fill="url(#gearB)" stroke="#e9e9e9" strokeWidth="4" />
        </Svg>
      </App48>
      <App48 dot={IDLE}>
        <Svg w={48} h={48}>
          <defs>
            <linearGradient id="fe" x1="0" y1="8" x2="48" y2="46" gradientUnits="userSpaceOnUse"><stop stopColor="#ffdd78" /><stop offset="0.600" stopColor="#fdc935" /><stop offset="1" stopColor="#f5ae12" /></linearGradient>
          </defs>
          <path d="M0 6q0-2 2-2h13q2 0 3 1.500L20.500 9V20H0Z" fill="#dc9c07" />
          <path d="M0 12.500q0-1.500 1.500-1.500H16q2 0 3-1t3-1.500h24.500Q48 8.500 48 10v34q0 2-2 2H2q-2 0-2-2Z" fill="url(#fe)" />
          <path d="M8 46v-9q0-5 5-5h22q5 0 5 5v9Z" fill="#1579c9" />
          <path d="M15 39h18" stroke="#0b4f93" strokeWidth="2" strokeLinecap="round" />
        </Svg>
      </App48>
      <App48 dot={IDLE}>
        <Svg w={48} h={48}>
          <defs>
            <linearGradient id="eg1" x1="4" y1="6" x2="48" y2="24" gradientUnits="userSpaceOnUse"><stop stopColor="#2fa9ee" /><stop offset="0.500" stopColor="#2fc3d8" /><stop offset="1" stopColor="#6ce544" /></linearGradient>
            <linearGradient id="eg2" x1="6" y1="14" x2="20" y2="46" gradientUnits="userSpaceOnUse"><stop stopColor="#0f5cae" /><stop offset="0.600" stopColor="#0f86e0" /><stop offset="1" stopColor="#0f74cf" /></linearGradient>
          </defs>
          <circle cx="24" cy="24" r="24" fill="url(#eg1)" />
          <path d="M0 24C1 15 8 11 15 11c9 0 14 6 14 11-2-4-6-5-9-3-5 3-4 11 1 15 7 6 17 5 23 2-4 8-12 12-20 12C10 48 0 37 0 24Z" fill="url(#eg2)" />
          <path d="M20 19c-8 3-9 15-3 22 5 6 13 8 18 4 4-2 8-6 9.500-9-6 3-15 3-20-2-4-3-6-8-4.500-15Z" fill="#0f4f9c" />
          <path d="M29.500 22c0 4-3 5-1.500 8 2 3 8 3 12 1 4-2 7-4 8-7v8c-1.500 2.500-3 4-4.500 5-6 2-15 2-19.500-3-3-3-5-7-4.500-12 2-5 9-5 10 0Z" fill="#c4eae8" />
          <path d="M29.500 22c0 4-3 5-1.500 8 2 2.500 8 2.500 12 1 4-1.500 7-4 8-8V10H34Z" fill="#58dd68" opacity="0.500" />
        </Svg>
      </App48>
      <App48 dot={IDLE}>
        <Svg w={48} h={48}>
          <path d="M2 1h27l9 9v37q-10-2-18 0T2 47Z" fill="#f3f3f3" stroke="#c5c8c6" strokeWidth="0.800" />
          <path d="M29 1v9h9Z" fill="#d4d7d6" />
          <path d="M6 6h16M6 10h12M6 14h20M6 18h17M8 22h14M8 26h12M6 30h14M6 34h12M8 38h16M6 42h18" stroke="#cfcfcf" strokeWidth="1.200" />
          <g transform="translate(4 0)">
            <PythonMark />
          </g>
        </Svg>
      </App48>
      <App48 dot={IDLE}>
        <Svg w={48} h={48}>
          <defs>
            <linearGradient id="note" x1="0" y1="0" x2="1" y2="1"><stop stopColor="#7fdcf5" /><stop offset="1" stopColor="#35a6cd" /></linearGradient>
          </defs>
          <path d="M6 40h36v4H6Z" fill="#e4e9ea" />
          <path d="M6 43.500h36V48H6Z" fill="#a94f12" />
          <path d="M6 3.500h36v37H6Z" fill="url(#note)" />
          <path d="M12 2v2M20 2v2M28 2v2M36 2v2" stroke="#0b6c8e" strokeWidth="4" strokeLinecap="round" />
          <path d="M13.500 15h21M13.500 23h21M13.500 31h21" stroke="#0b6c8e" strokeWidth="3" strokeLinecap="round" />
        </Svg>
      </App48>
      <App48 dot={IDLE_WARM}>
        <Svg w={48} h={48}>
          <circle cx="24" cy="24" r="23" fill="#f40505" />
          <circle cx="24" cy="24" r="18" fill="#c80000" />
          <circle cx="25" cy="24" r="13" fill="#8d0000" />
          <path d="M12.500 14.500h9V27l7-12.500h11L17 41V18h-4.500Z" fill="#300" opacity="0.700" transform="translate(1 1)" />
          <path d="M11.500 13h9v14l8-14h11L15.500 39V17h-4Z" fill="#fff" />
        </Svg>
      </App48>
      <App48 dot={IDLE_WARM}>
        <Svg w={48} h={48}>
          <defs>
            <linearGradient id="leaf" x1="6" y1="34" x2="42" y2="12" gradientUnits="userSpaceOnUse"><stop stopColor="#ffd51a" /><stop offset="0.550" stopColor="#ffa92e" /><stop offset="1" stopColor="#f47a1a" /></linearGradient>
          </defs>
          <path d="M0 9c10-4 23-7 31-3 8 5 12 20 16 30-10 3-18 8-27 7C6 40 0 26 0 9Z" fill="url(#leaf)" stroke="#c98c4e" strokeWidth="0.800" />
          <path d="M3 12c9-4 20-7 27-4 4 3 6 7 8 12-12-3-25 0-33 6-2-6-2-10-2-14Z" fill="#fff" opacity="0.300" />
          <path d="M5 12l38 20" stroke="#5c5410" strokeWidth="4.500" />
          <path d="M5 11.500l29 15" stroke="#e3d321" strokeWidth="2.500" />
        </Svg>
      </App48>
      <App48 dot="w-[32px] bg-[#0078d4]" tile="border-2 border-[#dcdcd3] bg-[#f4f4f0]">
        <SharkFin size={48} id="finTask" />
      </App48>
      <App48 dot={IDLE_WARM}>
        <Svg w={48} h={48}>
          <defs>
            <linearGradient id="ph" x1="8" y1="4" x2="46" y2="34" gradientUnits="userSpaceOnUse"><stop stopColor="#1590dd" /><stop offset="0.500" stopColor="#2a63ae" /><stop offset="1" stopColor="#a052b5" /></linearGradient>
            <linearGradient id="ph2" x1="4" y1="20" x2="30" y2="46" gradientUnits="userSpaceOnUse"><stop stopColor="#55dcfb" /><stop offset="1" stopColor="#28a5ea" /></linearGradient>
          </defs>
          <rect x="3" y="3" width="42" height="42" rx="4.500" fill="url(#ph)" />
          <path d="M3 40l17-20q4-4 8 0l17 20v1q0 4-4 4H7q-4 0-4-4Z" fill="url(#ph2)" />
          <path d="M11 45l15-15q4-4 8 0l11 11q0 4-4 4Z" fill="#0d7fd8" />
          <circle cx="34" cy="11" r="4" fill="#f4f6fb" />
        </Svg>
      </App48>
      <App48 dot={IDLE_WARM}>
        <Svg w={48} h={48}>
          <defs>
            <linearGradient id="ff" x1="36" y1="4" x2="14" y2="46" gradientUnits="userSpaceOnUse"><stop stopColor="#ffe03a" /><stop offset="0.450" stopColor="#ff8f1f" /><stop offset="0.750" stopColor="#ff4134" /><stop offset="1" stopColor="#e31587" /></linearGradient>
            <radialGradient id="ff2" cx="0.500" cy="0.700" r="0.700"><stop stopColor="#5b3fe0" /><stop offset="1" stopColor="#a43be0" /></radialGradient>
          </defs>
          <path d="M30 1c5 4 8 8 9 13l3-2c3 5 4 11 3 16-2 10-10 17-21 17S4 37 3 27c0-7 2-10 5-13l1-5c2 1 3 3 4 4 2-1 4-1 6 0 3-5 7-5 11-12Z" fill="url(#ff)" />
          <circle cx="24" cy="25" r="9.500" fill="url(#ff2)" />
          <path d="M10 13c5 1 7 1 10 1-1 3 4 3 5 5s-5 3-6 5c-4 2-8-1-10-5Z" fill="#ff9a1e" />
          <path d="M28 12c8 2 13 9 10 17-2 5-5 7-9 8 7-5 7-13 2-18Z" fill="#ffbd2c" opacity="0.850" />
        </Svg>
      </App48>
      <App48 dot="w-[12px] bg-[#c42b1c]" tile="bg-[#fce6e8]">
        <Svg w={48} h={48}>
          <defs>
            <linearGradient id="wx" x1="0" y1="0" x2="0" y2="1"><stop stopColor="#5eea7a" /><stop offset="1" stopColor="#14c958" /></linearGradient>
          </defs>
          <path d="M17 4c10 0 17 7 17 15s-7 15-17 15q-4 0-7-1.500L5.500 35l1-5C2 27 0 23 0 19 0 11 7 4 17 4Z" fill="url(#wx)" />
          <circle cx="11.500" cy="14.500" r="2.300" fill="#16873c" />
          <circle cx="23" cy="14.500" r="2.300" fill="#16873c" />
          <path d="M33.500 18C41 18 48 23.500 48 30.500c0 4-2 6.500-4.500 8.500l.500 4.500-4.500-2.500q-3 1-6 1c-8 0-14.500-4.500-14.500-11.500S26 18 33.500 18Z" fill="#e7e7e7" />
          <circle cx="28.500" cy="27" r="2" fill="#8b8b8b" />
          <circle cx="38" cy="27" r="2" fill="#8b8b8b" />
        </Svg>
      </App48>
    </>
  );
}

function Tray() {
  return (
    <div className="relative flex grow text-[#111]">
      <Svg w={22} h={14} className="mt-[38px] ml-[45px]">
        <path d="M1 12.500L11 2.500l10 10" stroke="#1a1a1a" strokeWidth="2.200" />
      </Svg>
      <Svg w={28} h={32} className="mt-[29px] ml-[39px]">
        <path d="M2 7.500h24v13H2ZM14 0v31" stroke="#1a1a1a" strokeWidth="2.200" />
      </Svg>
      <Svg w={34} h={26} className="mt-[32px] ml-[34px]">
        <path d="M1.500 11.500a22 22 0 0 1 31 0M6 16a15.500 15.500 0 0 1 22 0M10.500 20.500a9.500 9.500 0 0 1 13 0" stroke="#1a1a1a" strokeWidth="2" />
        <circle cx="17" cy="22.500" r="3" fill="#1a1a1a" />
      </Svg>
      <Svg w={32} h={26} className="mt-[33px] ml-[14px]">
        <path d="M2 7.500h5.500l6-5.500v22l-6-5.500H2Z" stroke="#1a1a1a" strokeWidth="2" strokeLinejoin="round" />
        <path d="M20 7l10.500 11.500M30.500 7L20 18.500" stroke="#1a1a1a" strokeWidth="1.800" />
      </Svg>
      <Svg w={34} h={28} className="mt-[30px] ml-[16px]">
        <path d="M14 7h10q5 0 5 5v8q0 5-5 5H6q-3 0-4-3" stroke="#1a1a1a" strokeWidth="2.200" />
        <path d="M9 21l5-3 4-7h6v10Z" fill="#1a1a1a" />
        <path d="M30 13h2q1.500 0 1.500 1.500v3Q33.500 19 32 19h-2Z" fill="#1a1a1a" />
        <path d="M10 0c4 4 7 8 5 14-1 4-4 5-7 5l-5 4-1.500-1.500L4 19C0 16-1 10 3 6c2-2 5-3 7-6Z" fill="#111" />
        <path d="M16 9q1 8-8 11" stroke="#c8ecea" strokeWidth="1.500" />
      </Svg>
      <div className="ml-auto flex w-[140px] flex-col pt-[13px] text-right text-[24px] leading-[32px] tracking-[-0.5px] text-[#1a1a1a]">
        <span>13:51</span>
        <span>2024/3/12</span>
      </div>
      <Svg w={28} h={32} className="mt-[30px] mr-[42px] ml-[17px]">
        <path d="M4 14a10 10 0 0 1 20 0v6l2.500 4.500H1.500L4 20Z" stroke="#1a1a1a" strokeWidth="2" strokeLinejoin="round" />
        <path d="M9.500 25.500q1 4 4.500 4t4.500-4" stroke="#1a1a1a" strokeWidth="2" />
      </Svg>
      <div className="absolute right-[15px] bottom-[7px] font-['Liberation_Sans',sans-serif] text-[17px] leading-[22px] text-[#e9f3f2] [text-shadow:1px_1px_1px_#666]">
        CSDN @Rick66Ashley
      </div>
    </div>
  );
}

function TaskBar() {
  return (
    <div className="flex h-[96px] shrink-0 border-t-2 border-[#a5b9bb] bg-[linear-gradient(90deg,#cae4e8_0px,#cbe2e9_400px,#cde3ea_560px,#bfeae9_650px,#c5ede1_730px,#c3ebe4_860px,#bfeae9_980px,#c4e6ea_1060px,#bfebe9_1200px,#c7ecdf_1320px,#cdeadf_1420px,#dfe7de_1480px,#e7e6db_1620px,#ece5dc_1740px,#f4e2d9_1860px,#f3e2d9_1990px,#dfe6e2_2060px,#c5e9ea_2120px,#c0eae9_2280px,#c9ebdf_2380px,#c2eae6_2450px,#c3e4ea_2520px)]">
      <div className="flex w-[319px] shrink-0 pt-[11px]">
        <Weather />
        <Svg w={46} h={46} className="mt-[13px] ml-[166px]">
          <defs>
            <linearGradient id="win" x1="0" y1="0" x2="46" y2="46" gradientUnits="userSpaceOnUse">
              <stop stopColor="#4fd1fd" />
              <stop offset="0.500" stopColor="#1f9ce6" />
              <stop offset="0.800" stopColor="#0a78d4" />
            </linearGradient>
          </defs>
          <path d="M0 2q0-2 2-2h20v22H0ZM24 0h20q2 0 2 2v20H24ZM0 24h22v22H2q-2 0-2-2ZM24 24h22v20q0 2-2 2H24Z" fill="url(#win)" />
        </Svg>
      </div>
      <div className="mt-[15px] flex h-[62px] w-[437px] shrink-0 rounded-full border-2 border-t-[#c0d8dd] border-r-[#b0cfd0] border-b-[#a9c0c6] border-l-[#c0d8dd] bg-[#eef6f8]">
        <Svg w={30} h={32} className="mt-[14px] ml-[19px]">
          <circle cx="13.500" cy="13.500" r="11.500" stroke="#2a2a2a" strokeWidth="2.800" />
          <path d="M21.500 22l6.500 7" stroke="#1a1a1a" strokeWidth="3.800" strokeLinecap="round" />
        </Svg>
        <span className="ml-[21px] text-[28px] leading-[60px] text-[#5b5f60]">搜索</span>
        <div className="mt-[3px] mr-px ml-auto">
          <Dragon />
        </div>
      </div>
      <div className="flex w-[1238px] shrink-0 pl-[6px]">
        <TaskApps />
      </div>
      <Tray />
    </div>
  );
}

export default function App() {
  return (
    <div className={`flex h-[1674px] w-[2520px] flex-col overflow-hidden bg-[#efefef] ${UI}`}>
      <TitleBar />
      <MenuBar />
      <div className="h-[2px] shrink-0 border-b border-white bg-[#efefef]" />
      <ToolBar />
      <div className="h-[4px] shrink-0 border-t-2 border-b border-t-[#b8b8b8] border-b-white bg-[#efefef]" />
      <FilterBar />
      <div className="h-[3px] shrink-0 border-t-2 border-[#b8b8b8] bg-[#efefef]" />
      <PacketList />
      <div className="h-[10px] shrink-0" />
      <div className="flex shrink-0">
        <Details />
        <HexPane />
      </div>
      <StatusBar />
      <TaskBar />
    </div>
  );
}
